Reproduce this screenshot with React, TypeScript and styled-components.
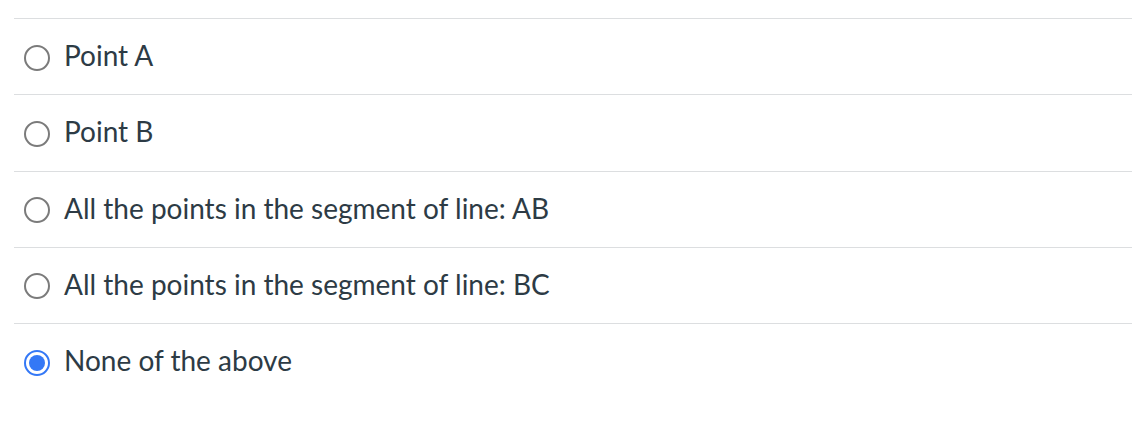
import React from "react";
import styled, { createGlobalStyle } from "styled-components";

const Global = createGlobalStyle`
  html, body { margin: 0; padding: 0; background: #fff; }
  body { font-family: Lato, "Liberation Sans", sans-serif; }
`;

const List = styled.div`
  padding: 18px 0 0 14px;
  display: flex;
  flex-direction: column;
`;

const Row = styled.label`
  display: flex;
  align-items: center;
  gap: 15px;
  height: 76.25px;
  border-top: 1.5px solid #dcdee0;
  padding-left: 10px;
  box-sizing: border-box;
`;

const Radio = styled.span<{ $checked?: boolean }>`
  width: 26px;
  height: 26px;
  flex: none;
  box-sizing: border-box;
  border-radius: 50%;
  border: 2px solid ${(p) => (p.$checked ? "#3478f6" : "#7b7b7b")};
  display: flex;
  align-items: center;
  justify-content: center;
  margin-top: 2px;
  &::after {
    content: "";
    display: ${(p) => (p.$checked ? "block" : "none")};
    width: 16px;
    height: 16px;
    border-radius: 50%;
    background: #3478f6;
  }
`;

const Text = styled.span`
  font-family: Lato, "Liberation Sans", sans-serif;
  font-size: 28px;
  color: #2d3b45;
  margin-bottom: 3px;
  margin-left: -1px;
`;

const options = [
  "Point A",
  "Point B",
  "All the points in the segment of line: AB",
  "All the points in the segment of line: BC",
  "None of the above",
];

export default function App() {
  return (
    <>
      <Global />
      <List>
        {options.map((o, i) => (
          <Row key={o}>
            <Radio $checked={i === 4} />
            <Text>{o}</Text>
          </Row>
        ))}
      </List>
    </>
  );
}
